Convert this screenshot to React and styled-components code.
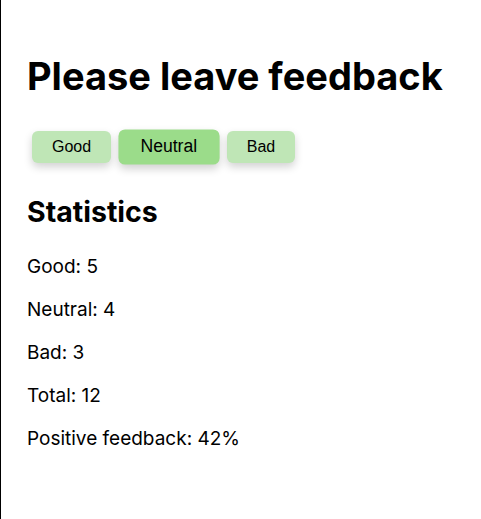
import React from "react";
import styled, { createGlobalStyle } from "styled-components";

const Global = createGlobalStyle`
  html, body { margin: 0; padding: 0; background: #fff; }
  body { font-family: Inter, "Noto Sans", sans-serif; color: #000; }
`;

const Page = styled.div`
  min-height: 100vh;
  box-sizing: border-box;
  border-left: 1px solid #000;
  padding: 54px 26px 0 26px;
`;

const Title = styled.h1`
  margin: 0;
  font-size: 38px;
  font-weight: 700;
  line-height: 44px;
`;

const Buttons = styled.div`
  display: flex;
  align-items: center;
  gap: 12px;
  margin: 33px 0 0 5px;
`;

const Btn = styled.button`
  font-family: "Liberation Sans", Arial, sans-serif;
  font-size: 16px;
  color: #000;
  border: none;
  border-radius: 6px;
  padding: 0 20px;
  height: 32px;
  background: ${(p) => (p.$active ? "#9bdc8a" : "#bfe6b6")};
  box-shadow: 0 4px 8px rgba(0, 0, 0, 0.18);
  transform: ${(p) => (p.$active ? "scale(1.1)" : "none")};
  cursor: pointer;
`;

const SubTitle = styled.h2`
  margin: 32px 0 0 0;
  font-size: 28.5px;
  font-weight: 700;
  line-height: 34px;
`;

const Stats = styled.div`
  display: flex;
  flex-direction: column;
  gap: 20px;
  margin-top: 26px;
`;

const Stat = styled.p`
  margin: 0;
  font-size: 19px;
  line-height: 23px;
`;

export default function App() {
  return (
    <>
      <Global />
      <Page>
        <Title>Please leave feedback</Title>
        <Buttons>
          <Btn>Good</Btn>
          <Btn $active>Neutral</Btn>
          <Btn>Bad</Btn>
        </Buttons>
        <SubTitle>Statistics</SubTitle>
        <Stats>
          <Stat>Good: 5</Stat>
          <Stat>Neutral: 4</Stat>
          <Stat>Bad: 3</Stat>
          <Stat>Total: 12</Stat>
          <Stat>Positive feedback: 42%</Stat>
        </Stats>
      </Page>
    </>
  );
}
